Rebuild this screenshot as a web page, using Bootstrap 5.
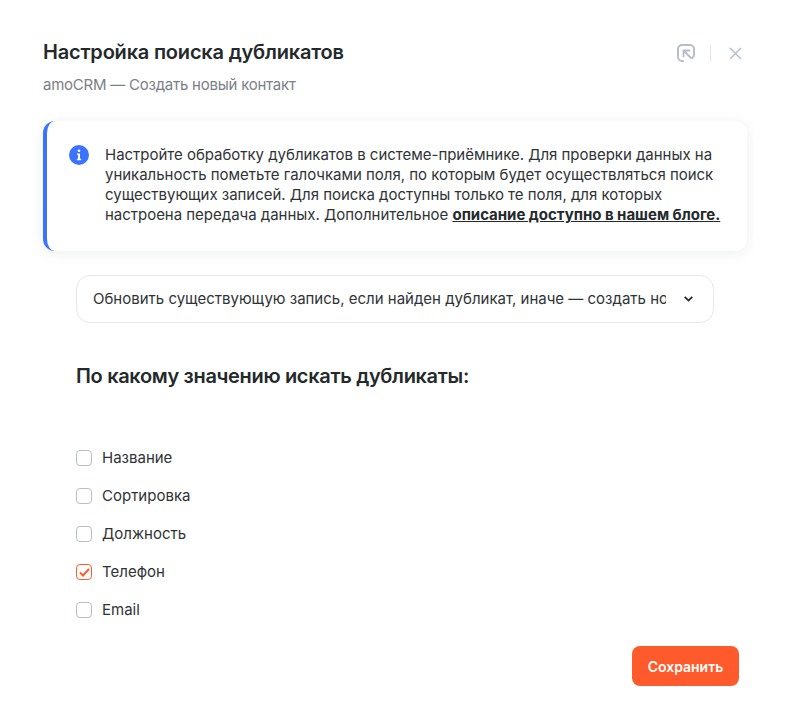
<!DOCTYPE html>
<html lang="ru"><head><meta charset="utf-8">
<link href="https://cdn.jsdelivr.net/npm/bootstrap@5.3.0/dist/css/bootstrap.min.css" rel="stylesheet">
<style>
html,body{height:720px;overflow:hidden;background:#fff}
body{font-family:Inter,"Noto Sans",sans-serif;color:#2b2d2f;font-size:15px}
.dlg{padding:41px 39px 0 43px}
.ttl{font-size:20px;font-weight:600;line-height:22px;color:#24292b;margin:0;letter-spacing:-.2px}
.sub{font-size:15px;line-height:20px;color:#7b8087;margin-top:12px;letter-spacing:-.24px}
.hdr-icons{padding-right:5px;padding-top:3px;color:#b4b9c6}
.vsep{width:1px;height:17px;background:#e4e6ea;margin:0 18px 0 15px}
.note{margin-top:26px;height:130px;background:#fff;border-left:4px solid #3b72ff;border-radius:12px;box-shadow:0 2px 14px rgba(30,40,60,.08);padding:24px 20px 0 22px;line-height:20px;font-size:15px;color:#2f3336;letter-spacing:-.02px}
.note a{color:#24292b;font-weight:700}
.txt{margin-left:16px;width:625px}
.ico{flex:none}
.body{padding:0 33px}
.sel{margin-top:24px;height:48px;border:1px solid #e7e8ec;border-radius:14px;padding:0 20px 0 16px;color:#2f3336;font-size:15px}
.sel-t{white-space:nowrap;overflow:hidden;width:573px}
.q{font-size:20px;font-weight:600;line-height:22px;margin:42px 0 0;color:#24292b;letter-spacing:-.33px}
.opts{margin-top:61px;gap:18px;font-size:15px;line-height:20px;color:#2f3336}
.cb{width:16px;height:16px;border:1px solid #b9bdca;border-radius:4px;background:#fff;flex:none;margin-right:10px}
.cb.on{border-color:#ff5a2b}
.save{background:#ff5a2b;border:0;border-radius:8px;color:#fff;font-weight:600;font-size:14px;width:107px;height:40px;padding:0}
.foot{margin-top:26px;padding-right:8px}
</style></head><body>
<div class="dlg">
<div class="d-flex justify-content-between align-items-start">
<div><h1 class="ttl">Настройка поиска дубликатов</h1><div class="sub">amoCRM — Создать новый контакт</div></div>
<div class="hdr-icons d-flex align-items-center">
<svg width="18" height="18" viewBox="0 0 18 18" fill="none" stroke="#b9bdca" stroke-width="2" stroke-linecap="round"><path d="M6 17H5a4 4 0 0 1-4-4V5a4 4 0 0 1 4-4h8a4 4 0 0 1 4 4v6a4 4 0 0 1-1.5 3"/><path d="M6.5 6.5 14 14M6.5 12.5V6.5h6" stroke-width="1.8"/></svg>
<span class="vsep"></span>
<svg width="13" height="13" viewBox="0 0 13 13" fill="none" stroke="#b4bccb" stroke-width="1.4"><path d="M1 1l11 11M12 1 1 12"/></svg>
</div></div>
<div class="note d-flex">
<svg class="ico" width="20" height="20" viewBox="0 0 20 20"><circle cx="10" cy="10" r="10" fill="#3b72ff"/><circle cx="10" cy="5.8" r="1.3" fill="#fff"/><path d="M8 8.6h3v5.2h1.1v1.4H7.9v-1.4H9V10H8z" fill="#fff"/></svg>
<div class="txt">Настройте обработку дубликатов в системе-приёмнике. Для проверки данных на уникальность пометьте галочками поля, по которым будет осуществляться поиск существующих записей. Для поиска доступны только те поля, для которых настроена передача данных. Дополнительное <a href="#">описание доступно в нашем блоге.</a></div>
</div>
<div class="body">
<div class="sel d-flex align-items-center justify-content-between">
<span class="sel-t">Обновить существующую запись, если найден дубликат, иначе — создать новую</span>
<svg width="9" height="6" viewBox="0 0 9 6" fill="none" stroke="#24292b" stroke-width="1.8"><path d="M.7.8l3.8 3.8L8.3.8"/></svg>
</div>
<h2 class="q">По какому значению искать дубликаты:</h2>
<div class="opts d-flex flex-column">
<div class="d-flex align-items-center"><span class="cb"></span>Название</div>
<div class="d-flex align-items-center"><span class="cb"></span>Сортировка</div>
<div class="d-flex align-items-center"><span class="cb"></span>Должность</div>
<div class="d-flex align-items-center"><span class="cb on d-flex align-items-center justify-content-center"><svg width="11" height="9" viewBox="0 0 11 9" fill="none" stroke="#ff5a2b" stroke-width="2"><path d="M1 4.5l3 3 6-6.5"/></svg></span>Телефон</div>
<div class="d-flex align-items-center"><span class="cb"></span>Email</div>
</div>
</div>
<div class="foot d-flex justify-content-end"><button class="btn save">Сохранить</button></div>
</div>
</body></html>
